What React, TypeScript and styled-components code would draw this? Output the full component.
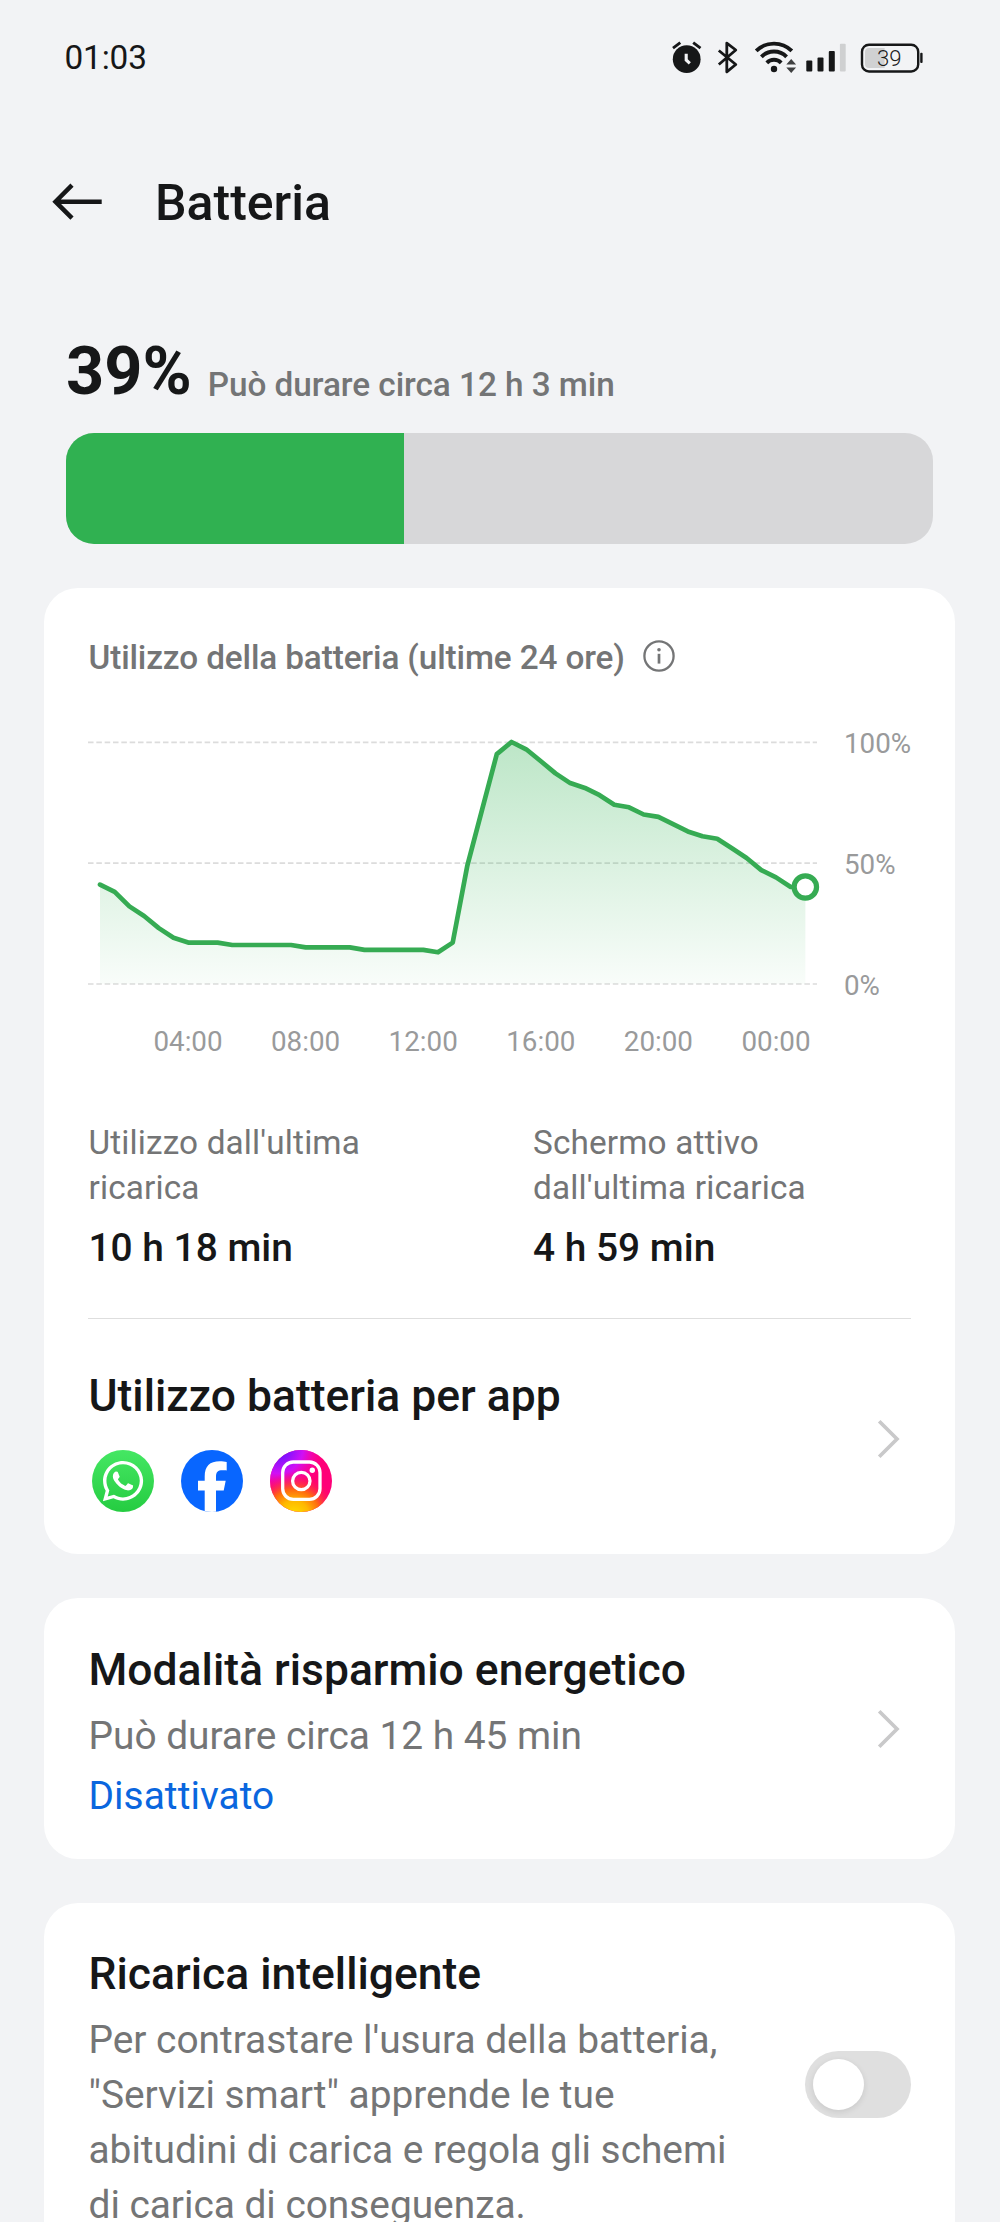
import React from 'react';
import styled, { createGlobalStyle } from 'styled-components';
import { FaWhatsapp } from 'react-icons/fa';

const ink = '#161718';
const muted = '#747576';
const green = '#30b151';

const GlobalStyle = createGlobalStyle`
  * { box-sizing: border-box; }
  body { margin: 0; background: #f2f3f5; }
`;

const Screen = styled.main`
  width: 1000px;
  height: 2222px;
  overflow: hidden;
  background: #f2f3f5;
  color: ${ink};
  font-family: Roboto, "Liberation Sans", sans-serif;
`;

const StatusBar = styled.div`
  display: flex;
  align-items: center;
  justify-content: space-between;
  height: 115px;
  padding: 0 76px 0 64.4px;
`;

const Clock = styled.time`
  font-size: 33.33px;
  line-height: 44px;
  letter-spacing: -0.1px;
`;

const StatusIcons = styled.div`
  display: flex;
  align-items: center;
  svg { display: block; }
`;

const IconSlot = styled.span<{ $before?: number }>`
  margin-left: ${(p) => p.$before ?? 0}px;
`;

const AppBar = styled.header`
  display: flex;
  align-items: center;
  gap: 51px;
  height: 175px;
  padding-left: 52px;
`;

const BackButton = styled.button`
  width: 52px;
  height: 44px;
  padding: 0;
  border: 0;
  background: none;
  svg { display: block; }
`;

const Title = styled.h1`
  margin: 0;
  font-size: 50px;
  font-weight: 500;
  line-height: 60px;
`;

const Summary = styled.section`
  padding: 48px 67px 44.3px 66px;
`;

const SummaryRow = styled.div`
  display: flex;
  align-items: flex-end;
  gap: 16px;
  height: 66px;
  margin-bottom: 29px;
`;

const Percent = styled.span`
  font-size: 66.67px;
  font-weight: 700;
  line-height: 66px;
`;

const Remaining = styled.span`
  margin-bottom: -0.8px;
  color: ${muted};
  font-size: 33.33px;
  font-weight: 500;
  line-height: 40px;
  letter-spacing: -0.05px;
`;

const LevelTrack = styled.div`
  height: 110.7px;
  border-radius: 28px;
  overflow: hidden;
  background: #d7d7d9;
`;

const LevelFill = styled.div`
  height: 100%;
  background: ${green};
`;

const Cards = styled.div`
  display: flex;
  flex-direction: column;
  gap: 44.2px;
  padding: 0 45px 0 44px;
`;

const Card = styled.section`
  padding: 0 44px;
  border-radius: 34px;
  background: #fff;
`;

const CardHeading = styled.div`
  display: flex;
  align-items: center;
  gap: 17px;
  padding: 47.6px 0 0 0.5px;
  margin-bottom: 20.4px;
  svg { display: block; margin-top: -3px; }
`;

const HeadingText = styled.h2`
  margin: 0;
  color: ${muted};
  font-size: 33.33px;
  font-weight: 500;
  line-height: 44px;
  letter-spacing: -0.13px;
`;

const ChartSvg = styled.svg`
  display: block;
  overflow: visible;
  text {
    fill: #999a9b;
    font-size: 27.78px;
  }
`;

const Stats = styled.div`
  display: grid;
  grid-template-columns: 444.5px 1fr;
  padding: 49.6px 0 46.6px 0.5px;
  border-bottom: 1px solid #dedede;
`;

const StatLabel = styled.div`
  max-width: 290px;
  margin-bottom: 14.2px;
  color: ${muted};
  font-size: 33.33px;
  line-height: 45.7px;
  letter-spacing: 0.14px;
`;

const StatValue = styled.div`
  font-size: 38.89px;
  font-weight: 500;
  line-height: 46px;
`;

const ItemRow = styled.div<{ $top: number; $bottom: number }>`
  display: flex;
  align-items: center;
  justify-content: space-between;
  margin: 0 -44px;
  padding: 0 44px 0 44.5px;
  & > :first-child {
    padding-top: ${(p) => p.$top}px;
    padding-bottom: ${(p) => p.$bottom}px;
  }
`;

const ItemBody = styled.div<{ $width?: number }>`
  width: ${(p) => (p.$width ? `${p.$width}px` : 'auto')};
`;

const ItemTitle = styled.h3`
  margin: 0;
  font-size: 44.44px;
  font-weight: 500;
  line-height: 52px;
`;

const ItemText = styled.p`
  margin: 11.5px 0 0;
  color: ${muted};
  font-size: 38.89px;
  line-height: 55px;
  letter-spacing: -0.03px;
`;

const ItemState = styled.p`
  margin: 6.400px 0 0;
  color: #0a66de;
  font-size: 38.89px;
  line-height: 54px;
  letter-spacing: 0.05px;
`;

const ChevronSvg = styled.svg<{ $shift?: number }>`
  display: block;
  margin-top: ${(p) => p.$shift ?? 0}px;
  margin-right: 11px;
`;

const AppIcons = styled.div`
  display: flex;
  gap: 27px;
  margin: 28.2px 0 0 3.5px;
`;

const AppBadge = styled.span`
  display: flex;
  align-items: center;
  justify-content: center;
  width: 62px;
  height: 62px;
  border-radius: 50%;
  overflow: hidden;
  color: #fff;
`;

const WhatsAppBadge = styled(AppBadge)`
  background: linear-gradient(#45e763, #25cc41);
`;

const Switch = styled.button`
  display: flex;
  align-items: center;
  width: 106px;
  height: 67px;
  padding: 0 8px;
  border: 0;
  border-radius: 34px;
  background: #dfdfdf;
`;

const Knob = styled.span`
  width: 51px;
  height: 51px;
  border-radius: 50%;
  background: #fff;
  box-shadow: 0 2px 6px rgba(0, 0, 0, 0.1);
`;

function AlarmIcon() {
  return (
    <svg width="32" height="40" viewBox="671 37.5 32 40">
      <circle cx="686.7" cy="58.7" r="13.9" fill={ink} />
      <path d="M673 47.6l7.3-5.4M700.5 47.6l-7.3-5.4" stroke={ink} strokeWidth="2.9" />
      <path d="M686.2 53.2v6.3l3.6 3.4" fill="none" stroke="#f2f3f5" strokeWidth="3.1" />
    </svg>
  );
}

function BluetoothIcon() {
  return (
    <svg width="22" height="40" viewBox="717 37.5 22 40">
      <path
        d="M718.8 50l17 14-9 7.300V42.600l9 6.900L718.8 64"
        fill="none"
        stroke={ink}
        strokeWidth="2.800"
        strokeLinejoin="round"
      />
    </svg>
  );
}

function WifiIcon() {
  return (
    <svg width="44" height="40" viewBox="754 37.5 44 40">
      <g fill="none" stroke={ink} strokeWidth="3.900">
        <path d="M756.2 50.400a25.4 25.4 0 0 1 35.6 0" />
        <path d="M761.400 56.300a17.8 17.8 0 0 1 25.200 0" />
        <path d="M766.800 62.300a10.200 10.200 0 0 1 14.400 0" />
      </g>
      <circle cx="774" cy="68.5" r="3.200" fill={ink} />
      <path d="M786.3 64l4.9-5.4 4.9 5.4zM786.3 67h9.8l-4.9 5.4z" fill="#3f4041" />
    </svg>
  );
}

function SignalIcon() {
  return (
    <svg width="42" height="40" viewBox="805 37.5 42 40">
      <g fill={ink}>
        <rect x="806.3" y="60" width="6" height="11" rx="1" />
        <rect x="817.5" y="57" width="6" height="14" rx="1" />
        <rect x="828.8" y="50.4" width="6" height="20.6" rx="1" />
      </g>
      <rect x="839.9" y="43.2" width="5.8" height="27.8" rx="1" fill="#cfd0d1" />
    </svg>
  );
}

function BatteryIcon() {
  return (
    <svg width="65" height="40" viewBox="859 37.5 65 40">
      <rect x="862" y="44.2" width="56.2" height="26.8" rx="7" fill="none" stroke={ink} strokeWidth="2.4" />
      <path d="M869 47.6h15.6v20H869a4 4 0 0 1-4-4v-12a4 4 0 0 1 4-4z" fill="#d0d1d2" />
      <rect x="920.2" y="52.3" width="2.4" height="10.2" rx="1" fill={ink} />
      <text x="889.300" y="65.1" textAnchor="middle" fontSize="22.2" fontWeight="300" fill="#1c1c1c">39</text>
    </svg>
  );
}

function BackIcon() {
  return (
    <svg width="52" height="44" viewBox="52 180.5 52 44" fill="none" stroke={ink} strokeWidth="4.500">
      <path d="M101.7 201.200H55.5M72 184.700l-16.5 16.5L72 217.700" />
    </svg>
  );
}

function InfoIcon() {
  return (
    <svg width="34" height="34" viewBox="0 0 34 34" fill="none" stroke={muted} strokeWidth="2.3">
      <circle cx="17" cy="17" r="14.6" />
      <path d="M17 14.8v9.8" strokeWidth="2.7" />
      <circle cx="17" cy="10.7" r="1.8" fill={muted} stroke="none" />
    </svg>
  );
}

function Chevron({ shift }: { shift?: number }) {
  return (
    <ChevronSvg $shift={shift} width="24" height="42" viewBox="0 0 24 42" fill="none" stroke="#c9c9ca" strokeWidth="3.7">
      <path d="M3.2 3.2L21 21 3.2 38.8" />
    </ChevronSvg>
  );
}

function FacebookIcon() {
  return (
    <svg width="62" height="62" viewBox="0 0 62 62">
      <rect width="62" height="62" fill="#0866ff" />
      <path
        d="M23.7 62V40.4H17v-9.7h6.7v-4.2c0-10.4 4.9-15.3 15.1-15.3 2.6 0 5.2.3 6.9.8v8.500c-1.1-.2-2.9-.2-4.4-.2-4.4 0-6.3 1.9-6.3 6.2v4.2h9.7l-2 9.7H35V62z"
        fill="#fff"
      />
    </svg>
  );
}

function InstagramIcon() {
  return (
    <svg width="62" height="62" viewBox="0 0 62 62">
      <defs>
        <radialGradient id="igWarm" gradientUnits="userSpaceOnUse" cx="24" cy="66" r="44">
          <stop offset="0.1" stopColor="#ffd600" />
          <stop offset="0.35" stopColor="#ffb800" />
          <stop offset="0.6" stopColor="#ff6a10" />
          <stop offset="1" stopColor="#ff0060" stopOpacity="0" />
        </radialGradient>
        <radialGradient id="igCool" gradientUnits="userSpaceOnUse" cx="8" cy="-2" r="46">
          <stop offset="0.2" stopColor="#7a12ff" />
          <stop offset="0.55" stopColor="#d010f5" />
          <stop offset="1" stopColor="#ff00b0" stopOpacity="0" />
        </radialGradient>
      </defs>
      <rect width="62" height="62" fill="#ff0078" />
      <rect width="62" height="62" fill="url(#igCool)" />
      <rect width="62" height="62" fill="url(#igWarm)" />
      <g fill="none" stroke="#fff" strokeWidth="3.3">
        <rect x="12.7" y="12" width="37.3" height="37.3" rx="10.5" />
        <circle cx="31.3" cy="31" r="8.7" />
      </g>
      <circle cx="42.3" cy="20.2" r="2.7" fill="#fff" />
    </svg>
  );
}

const levels = [
  41, 38, 32, 28, 23, 19, 17, 17, 17, 16, 16, 16, 16, 16, 15, 15, 15, 15, 14, 14, 14, 14, 14, 13, 17,
  49, 72, 95, 100, 97, 92, 87, 83, 81, 78, 74, 73, 70, 69, 66, 63, 61, 60, 56, 52, 47, 44, 40, 40,
];
const hours = ['04:00', '08:00', '12:00', '16:00', '20:00', '00:00'];

function UsageChart() {
  const x = (i: number) => 12 + i * 14.695;
  const y = (v: number) => 283.7 - v * 2.417;
  const line = levels.map((v, i) => `${x(i).toFixed(1)},${y(v).toFixed(1)}`).join(' ');
  return (
    <ChartSvg width="823" height="370" viewBox="0 0 823 370">
      <defs>
        <linearGradient id="usage" gradientUnits="userSpaceOnUse" x1="0" y1="42" x2="0" y2="283.7">
          <stop offset="0" stopColor={green} stopOpacity="0.32" />
          <stop offset="1" stopColor={green} stopOpacity="0.03" />
        </linearGradient>
      </defs>
      {[100, 50, 0].map((v) => (
        <g key={v}>
          <line x1="0" x2="729" y1={y(v) + 0.3} y2={y(v) + 0.3} stroke="#dcdcdc" strokeWidth="1.7" strokeDasharray="5.55 2.78" />
          <text x="756" y={y(v) + 11.3}>{v}%</text>
        </g>
      ))}
      <polygon points={`${x(0)},283.7 ${line} ${x(48)},283.7`} fill="url(#usage)" />
      <polyline points={line} fill="none" stroke="#36ab53" strokeWidth="4.700" strokeLinecap="round" strokeLinejoin="round" />
      <circle cx={x(48)} cy={y(40)} r="11.2" fill="#fff" stroke="#36ab53" strokeWidth="5.200" />
      {hours.map((h, i) => (
        <text key={h} x={100 + i * 117.6} y="350.6" textAnchor="middle">{h}</text>
      ))}
    </ChartSvg>
  );
}

export default function App() {
  const level = 39;
  return (
    <Screen>
      <GlobalStyle />
      <StatusBar>
        <Clock>01:03</Clock>
        <StatusIcons>
          <IconSlot><AlarmIcon /></IconSlot>
          <IconSlot $before={14}><BluetoothIcon /></IconSlot>
          <IconSlot $before={15}><WifiIcon /></IconSlot>
          <IconSlot $before={7}><SignalIcon /></IconSlot>
          <IconSlot $before={12}><BatteryIcon /></IconSlot>
        </StatusIcons>
      </StatusBar>

      <AppBar>
        <BackButton aria-label="Indietro"><BackIcon /></BackButton>
        <Title>Batteria</Title>
      </AppBar>

      <Summary>
        <SummaryRow>
          <Percent>{level}%</Percent>
          <Remaining>Può durare circa 12 h 3 min</Remaining>
        </SummaryRow>
        <LevelTrack>
          <LevelFill style={{ width: `${level}%` }} />
        </LevelTrack>
      </Summary>

      <Cards>
        <Card>
          <CardHeading>
            <HeadingText>Utilizzo della batteria (ultime 24 ore)</HeadingText>
            <InfoIcon />
          </CardHeading>
          <UsageChart />
          <Stats>
            <div>
              <StatLabel>Utilizzo dall'ultima ricarica</StatLabel>
              <StatValue>10 h 18 min</StatValue>
            </div>
            <div>
              <StatLabel>Schermo attivo dall'ultima ricarica</StatLabel>
              <StatValue>4 h 59 min</StatValue>
            </div>
          </Stats>
          <ItemRow $top={51.3} $bottom={42}>
            <ItemBody>
              <ItemTitle>Utilizzo batteria per app</ItemTitle>
              <AppIcons>
                <WhatsAppBadge><FaWhatsapp size={46} /></WhatsAppBadge>
                <AppBadge><FacebookIcon /></AppBadge>
                <AppBadge><InstagramIcon /></AppBadge>
              </AppIcons>
            </ItemBody>
            <Chevron shift={5} />
          </ItemRow>
        </Card>

        <Card>
          <ItemRow $top={45.6} $bottom={36}>
            <ItemBody>
              <ItemTitle>Modalità risparmio energetico</ItemTitle>
              <ItemText>Può durare circa 12 h 45 min</ItemText>
              <ItemState>Disattivato</ItemState>
            </ItemBody>
            <Chevron />
          </ItemRow>
        </Card>

        <Card>
          <ItemRow $top={45} $bottom={35}>
            <ItemBody $width={650}>
              <ItemTitle>Ricarica intelligente</ItemTitle>
              <ItemText>
                Per contrastare l'usura della batteria, "Servizi smart" apprende le tue abitudini di carica e
                regola gli schemi di carica di conseguenza.
              </ItemText>
            </ItemBody>
            <Switch role="switch" aria-checked={false} aria-label="Ricarica intelligente">
              <Knob />
            </Switch>
          </ItemRow>
        </Card>
      </Cards>
    </Screen>
  );
}
